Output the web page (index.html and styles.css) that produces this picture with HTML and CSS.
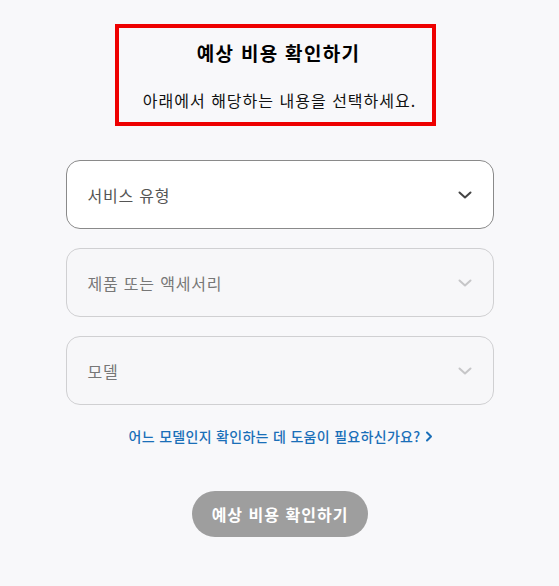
FILE: index.html
```html
<!DOCTYPE html>
<html lang="ko">
<head>
<meta charset="utf-8">
<link rel="stylesheet" href="styles.css">
</head>
<body>
<div class="page">
  <div class="heading">
    <h1 class="title">예상 비용 확인하기</h1>
    <p class="subtitle">아래에서 해당하는 내용을 선택하세요.</p>
  </div>
  <div class="fields">
    <div class="select active">
      <span class="label">서비스 유형</span>
      <svg class="chev" width="16" height="10" viewBox="0 0 16 10"><path d="M2.5 2.5l5.5 5 5.5-5" fill="none" stroke="currentColor" stroke-width="2" stroke-linecap="round" stroke-linejoin="round"/></svg>
    </div>
    <div class="select disabled">
      <span class="label">제품 또는 액세서리</span>
      <svg class="chev" width="16" height="10" viewBox="0 0 16 10"><path d="M2.5 2.5l5.5 5 5.5-5" fill="none" stroke="currentColor" stroke-width="2" stroke-linecap="round" stroke-linejoin="round"/></svg>
    </div>
    <div class="select disabled">
      <span class="label">모델</span>
      <svg class="chev" width="16" height="10" viewBox="0 0 16 10"><path d="M2.5 2.5l5.5 5 5.5-5" fill="none" stroke="currentColor" stroke-width="2" stroke-linecap="round" stroke-linejoin="round"/></svg>
    </div>
  </div>
  <a class="help" href="#"><span>어느 모델인지 확인하는 데 도움이 필요하신가요?</span><svg class="arrow" width="8" height="11" viewBox="0 0 8 11"><path d="M2 1.5l4 4-4 4" fill="none" stroke="currentColor" stroke-width="2" stroke-linecap="round" stroke-linejoin="round"/></svg></a>
  <div class="actions">
    <button class="cta" type="button">예상 비용 확인하기</button>
  </div>
</div>
</body>
</html>
```

FILE: styles.css
```css
html, body {
  margin: 0;
  padding: 0;
  background: #f8f8fa;
}
body {
  font-family: "Noto Sans CJK KR", "Noto Sans", sans-serif;
  color: #000;
  width: 559px;
  height: 586px;
  overflow: hidden;
}
.page {
  display: flex;
  flex-direction: column;
  padding-top: 24px;
}
.heading {
  box-sizing: border-box;
  width: 321px;
  height: 102px;
  margin-left: 115px;
  border: 4px solid #ee0000;
  display: flex;
  flex-direction: column;
  align-items: center;
}
.title {
  margin: 12px 0 0 0;
  font-size: 19px;
  font-weight: 700;
  line-height: 26px;
  letter-spacing: 1.3px;
  padding-left: 6px;
}
.subtitle {
  margin: 22px 0 0 0;
  font-size: 16px;
  line-height: 24px;
  letter-spacing: 1px;
  padding-left: 8px;
  color: #111;
}
.fields {
  width: 428px;
  margin: 34px auto 0;
  display: flex;
  flex-direction: column;
  gap: 19px;
}
.select {
  box-sizing: border-box;
  height: 69px;
  border-radius: 14px;
  display: flex;
  align-items: center;
  justify-content: space-between;
  padding: 0 20px 0 21px;
}
.select.active {
  background: #fff;
  border: 1px solid #8a8a8a;
  color: #555;
}
.select.active .chev { color: #444; }
.select.disabled {
  background: #f7f7f9;
  border: 1px solid #d0d0d2;
  color: #777;
}
.select.disabled .chev { color: #c6c6c8; }
.label {
  font-size: 16px;
  line-height: 24px;
  letter-spacing: 0.8px;
  padding-top: 1px;
}
.help {
  align-self: center;
  margin-top: 21px;
  margin-left: 3px;
  font-size: 14px;
  line-height: 20px;
  letter-spacing: 0.3px;
  color: #1a6fb8;
  text-decoration: none;
  font-weight: 500;
  display: flex;
  align-items: center;
  gap: 5px;
}
.actions {
  display: flex;
  justify-content: center;
  margin-top: 45px;
}
.cta {
  width: 176px;
  height: 46px;
  border: 0;
  border-radius: 23px;
  background: #9e9e9e;
  color: #fff;
  font-family: "Noto Sans CJK KR", "Noto Sans", sans-serif;
  font-size: 16px;
  font-weight: 700;
  letter-spacing: 1px;
  margin-left: 1px;
}
```
